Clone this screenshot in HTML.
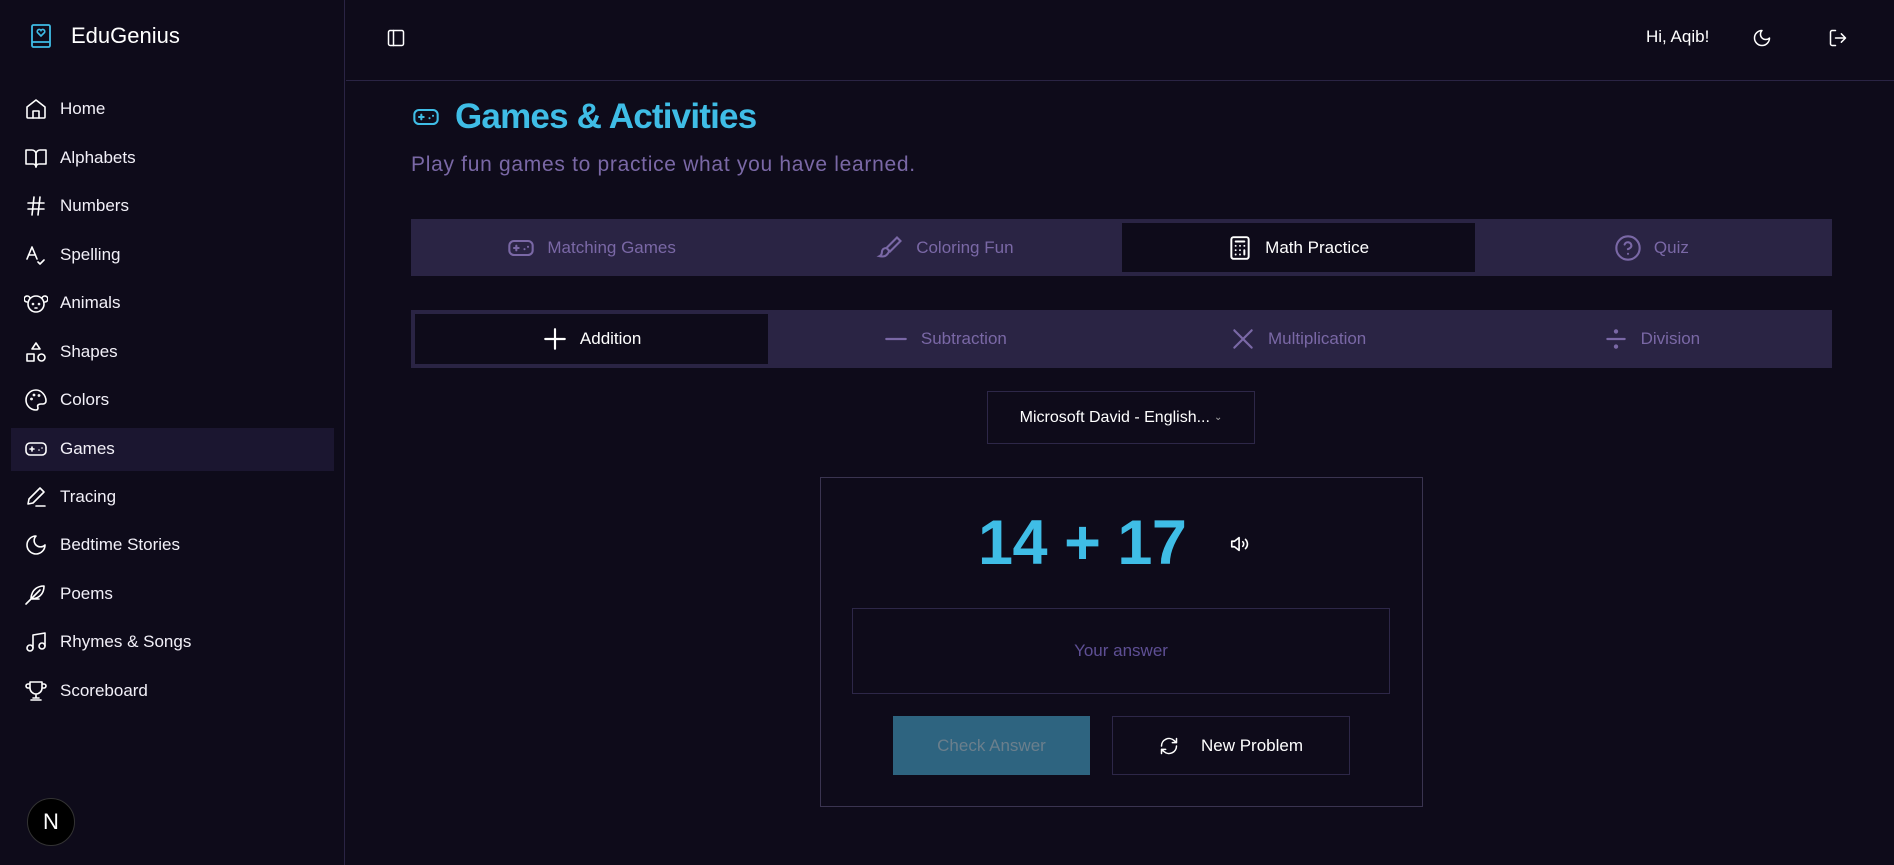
<!DOCTYPE html>
<html><head><meta charset="utf-8"><style>
*{box-sizing:border-box;margin:0;padding:0}
body{width:1894px;height:865px;background:#0e0b1a;font-family:"Liberation Sans",sans-serif;color:#fff;position:relative;overflow:hidden}
.side{position:absolute;left:0;top:0;width:345px;height:865px;border-right:1px solid #2a2444}
.logo{position:absolute;left:31px;top:24px}
.brand{position:absolute;left:71px;top:23px;font-size:22px;color:#fff}
.nav{position:absolute;left:11px;top:85px;width:323px}
.it{height:48.5px;display:flex;align-items:center;padding-left:13px;font-size:17px;color:#f2f0f8}
.it svg{width:24px;height:24px;margin-right:12px;fill:none;stroke:#fff;stroke-width:1.6;stroke-linecap:round;stroke-linejoin:round}
.it.act{background:#1b1630;height:43px;margin:3px 0 2px}
.nbtn{position:absolute;left:27px;top:798px;width:48px;height:48px;border-radius:50%;background:#000;border:1px solid #333;color:#fff;font-size:22px;display:flex;align-items:center;justify-content:center}
.hdr{position:absolute;left:346px;top:0;right:0;height:81px;border-bottom:1px solid #2a2444}
.ic{fill:none;stroke:#fff;stroke-width:1.8;stroke-linecap:round;stroke-linejoin:round}
.title{position:absolute;left:412px;top:97px;display:flex;align-items:center}
.title h1{font-size:35px;color:#3fbde6;font-weight:bold;margin-left:15px;letter-spacing:-0.8px}
.sub{position:absolute;left:411px;top:153px;font-size:21px;letter-spacing:0.7px;color:#7a68a6}
.bar{position:absolute;left:411px;width:1421px;background:#2a2444;display:flex;padding:4px}
.bar div{flex:1;display:flex;align-items:center;justify-content:center;font-size:17px;color:#7a68a6}
.bar div svg{margin-right:12px}
.bar div.on{background:#0e0b1a;color:#fff}
.sel{position:absolute;left:987px;top:391px;width:268px;height:53px;border:1px solid #2d2748;display:flex;align-items:center;justify-content:center;font-size:16px;color:#fff}
.card{position:absolute;left:820px;top:477px;width:603px;height:330px;border:1px solid #3a3450}
.prob{position:absolute;left:978px;top:507px;font-size:63px;font-weight:bold;color:#3fbde6;letter-spacing:-0.5px}
.inp{position:absolute;left:852px;top:608px;width:538px;height:86px;border:1px solid #2d2748;display:flex;align-items:center;justify-content:center;font-size:17px;color:#5e4f94}
.chk{position:absolute;left:893px;top:716px;width:197px;height:59px;background:#2e6480;color:#6b7f8c;font-size:17px;display:flex;align-items:center;justify-content:center}
.np{position:absolute;left:1112px;top:716px;width:238px;height:59px;border:1px solid #2d2748;color:#fff;font-size:17px;display:flex;align-items:center;justify-content:center}
</style></head><body>
<div class="side">
<svg class="logo" width="20" height="24" viewBox="0 0 20 24"><rect x="1" y="1" width="18" height="22" rx="1.5" fill="none" stroke="#3fbde6" stroke-width="1.8"/><line x1="1" y1="18" x2="19" y2="18" stroke="#3fbde6" stroke-width="1.8"/><path d="M10 12 l-3.5-3.5 a2 2 0 0 1 3.5-2 a2 2 0 0 1 3.5 2z" fill="none" stroke="#3fbde6" stroke-width="1.6"/></svg>
<div class="brand">EduGenius</div>
<div class="nav">
<div class="it"><svg viewBox="0 0 24 24"><path d="M3 10l9-7 9 7v10a1 1 0 0 1-1 1H4a1 1 0 0 1-1-1z"/><path d="M9 21v-7h6v7"/></svg>Home</div>
<div class="it"><svg viewBox="0 0 24 24"><path d="M2 4h6a4 4 0 0 1 4 4v13a3 3 0 0 0-3-3H2z"/><path d="M22 4h-6a4 4 0 0 0-4 4v13a3 3 0 0 1 3-3h7z"/></svg>Alphabets</div>
<div class="it"><svg viewBox="0 0 24 24"><path d="M4 9h16M4 15h16M10 3L8 21M16 3l-2 18"/></svg>Numbers</div>
<div class="it"><svg viewBox="0 0 24 24"><path d="M3 16l5-12 5 12M4.5 12h7M14 19l2 2 4-4"/></svg>Spelling</div>
<div class="it"><svg viewBox="0 0 24 24"><circle cx="12" cy="13" r="8"/><path d="M6 7a3 3 0 1 0-3 4M18 7a3 3 0 1 1 3 4"/><circle cx="9" cy="13" r=".5"/><circle cx="15" cy="13" r=".5"/><path d="M11 17h2"/></svg>Animals</div>
<div class="it"><svg viewBox="0 0 24 24"><path d="M12 3l4 6H8z"/><rect x="3" y="14" width="7" height="7"/><circle cx="17.5" cy="17.5" r="3.5"/></svg>Shapes</div>
<div class="it"><svg viewBox="0 0 24 24"><path d="M12 2a10 10 0 0 0 0 20c1.5 0 2-1 2-2s-1-2 0-3 2-1 3-1h2a3 3 0 0 0 3-3c0-6-5-11-10-11z"/><circle cx="7.5" cy="11" r=".6"/><circle cx="10" cy="7" r=".6"/><circle cx="15" cy="7.5" r=".6"/></svg>Colors</div>
<div class="it act"><svg viewBox="0 0 24 24"><rect x="2" y="6" width="20" height="12" rx="4"/><path d="M6 12h4M8 10v4M15 13h.01M18 11h.01"/></svg>Games</div>
<div class="it"><svg viewBox="0 0 24 24"><path d="M4 19l1-5L16 3l4 4L9 18zM12 21h9"/></svg>Tracing</div>
<div class="it"><svg viewBox="0 0 24 24"><path d="M12 3a6 6 0 0 0 9 9 9 9 0 1 1-9-9z"/></svg>Bedtime Stories</div>
<div class="it"><svg viewBox="0 0 24 24"><path d="M20 4c-6 0-12 3-13 12l1 1c9-1 12-7 12-13zM2 22L16 8M8 17h7"/></svg>Poems</div>
<div class="it"><svg viewBox="0 0 24 24"><path d="M9 18V5l12-2v13"/><circle cx="6" cy="18" r="3"/><circle cx="18" cy="16" r="3"/></svg>Rhymes &amp; Songs</div>
<div class="it"><svg viewBox="0 0 24 24"><path d="M6 9H4a2 2 0 0 1 0-4h2M18 9h2a2 2 0 0 0 0-4h-2M6 3h12v6a6 6 0 0 1-12 0zM12 15v4M7 21h10M9 19h6"/></svg>Scoreboard</div>
</div>
<div class="nbtn">N</div>
</div>
<div class="hdr">
<svg style="position:absolute;left:40px;top:28px" width="20" height="20" viewBox="0 0 24 24" class="ic"><rect x="3" y="3" width="18" height="18" rx="2"/><path d="M9 3v18"/></svg>
<div style="position:absolute;left:1300px;top:27px;font-size:17px">Hi, Aqib!</div>
<svg style="position:absolute;left:1406px;top:28px" width="20" height="20" viewBox="0 0 24 24" class="ic"><path d="M12 3a6 6 0 0 0 9 9 9 9 0 1 1-9-9z"/></svg>
<svg style="position:absolute;left:1482px;top:28px" width="20" height="20" viewBox="0 0 24 24" class="ic"><path d="M9 21H5a2 2 0 0 1-2-2V5a2 2 0 0 1 2-2h4M16 17l5-5-5-5M21 12H9"/></svg>
</div>
<div class="title"><svg width="28" height="28" viewBox="0 0 24 24" fill="none" stroke="#3fbde6" stroke-width="1.8" stroke-linecap="round"><rect x="2" y="6" width="20" height="12" rx="4"/><path d="M6 12h4M8 10v4M15 13h.01M18 11h.01"/></svg><h1>Games &amp; Activities</h1></div>
<div class="sub">Play fun games to practice what you have learned.</div>
<div class="bar" style="top:219px;height:57px">
<div><svg width="28" height="28" viewBox="0 0 24 24" fill="none" stroke="#7a68a6" stroke-width="1.8" stroke-linecap="round"><rect x="2" y="6" width="20" height="12" rx="4"/><path d="M6 12h4M8 10v4M15 13h.01M18 11h.01"/></svg>Matching Games</div>
<div><svg width="28" height="28" viewBox="0 0 24 24" fill="none" stroke="#7a68a6" stroke-width="1.8" stroke-linecap="round"><path d="M18 3l3 3-9 9-3-3zM9 12c-3 0-4 2-4 4s-2 3-2 3 4 1 6-1c1-1 2-2 2-3"/></svg>Coloring Fun</div>
<div class="on"><svg width="26" height="28" viewBox="0 0 24 24" fill="none" stroke="#fff" stroke-width="1.8" stroke-linecap="round"><rect x="4" y="2" width="16" height="20" rx="2"/><path d="M8 6h8M8 10h.01M12 10h.01M16 10h.01M8 14h.01M12 14h.01M16 14v4M8 18h.01M12 18h.01"/></svg>Math Practice</div>
<div><svg width="28" height="28" viewBox="0 0 24 24" fill="none" stroke="#7a68a6" stroke-width="1.8" stroke-linecap="round"><circle cx="12" cy="12" r="10"/><path d="M9.1 9a3 3 0 0 1 5.8 1c0 2-3 3-3 3M12 17h.01"/></svg>Quiz</div>
</div>
<div class="bar" style="top:310px;height:58px">
<div class="on"><svg width="26" height="26" viewBox="0 0 24 24" fill="none" stroke="#fff" stroke-width="2" stroke-linecap="round"><path d="M12 3v18M3 12h18"/></svg>Addition</div>
<div><svg width="26" height="26" viewBox="0 0 24 24" fill="none" stroke="#7a68a6" stroke-width="2" stroke-linecap="round"><path d="M3 12h18"/></svg>Subtraction</div>
<div><svg width="26" height="26" viewBox="0 0 24 24" fill="none" stroke="#7a68a6" stroke-width="2" stroke-linecap="round"><path d="M4 4l16 16M20 4L4 20"/></svg>Multiplication</div>
<div><svg width="26" height="26" viewBox="0 0 24 24" fill="none" stroke="#7a68a6" stroke-width="2" stroke-linecap="round"><path d="M4 12h16"/><circle cx="12" cy="5" r="1"/><circle cx="12" cy="19" r="1"/></svg>Division</div>
</div>
<div class="sel">Microsoft David - English... <span style="font-size:10px;margin-left:4px;color:#aaa">⌄</span></div>
<div class="card"></div>
<div class="prob">14 + 17</div>
<svg style="position:absolute;left:1229px;top:533px" width="22" height="22" viewBox="0 0 24 24" class="ic"><path d="M11 5L6 9H3v6h3l5 4zM15 9.5a3.5 3.5 0 0 1 0 5M18 7a7 7 0 0 1 0 10"/></svg>
<div class="inp">Your answer</div>
<div class="chk">Check Answer</div>
<div class="np"><svg width="20" height="20" viewBox="0 0 24 24" class="ic" style="margin-right:22px"><path d="M3 12a9 9 0 0 1 15-6.7L21 8M21 3v5h-5M21 12a9 9 0 0 1-15 6.7L3 16M3 21v-5h5"/></svg>New Problem</div>
</body></html>
